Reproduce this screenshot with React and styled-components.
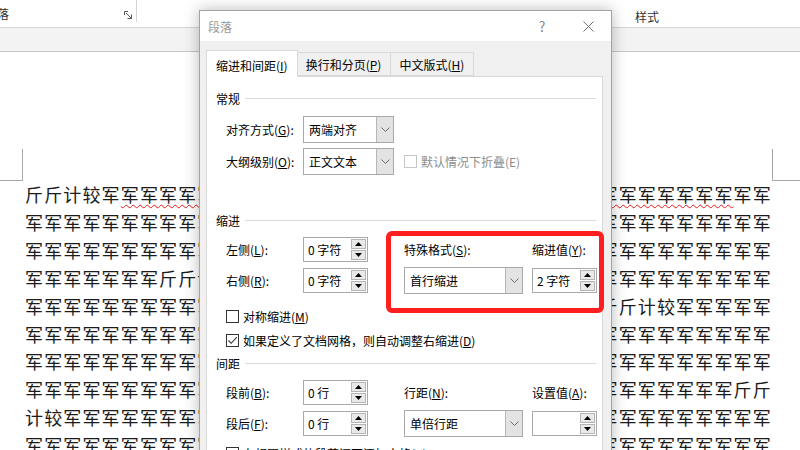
import React from "react"
import styled, { createGlobalStyle } from "styled-components"

const GlobalStyle = createGlobalStyle`
  html, body {
    margin: 0;
    padding: 0;
    overflow: hidden;
    background: #fff;
  }
`

const J = "军"
const docLines = [
  { pre: "斤斤计较军", wavy: J.repeat(32), post: J.repeat(2) },
  { pre: J.repeat(39) },
  { pre: J.repeat(39) },
  { pre: J.repeat(7) + "斤斤计较" + J.repeat(28) },
  { pre: J.repeat(30) + "斤斤计较" + J.repeat(5) },
  { pre: J.repeat(39) },
  { pre: J.repeat(39) },
  { pre: J.repeat(37) + "斤斤" },
  { pre: "计较" + J.repeat(37) },
  { pre: J.repeat(39) },
]

const Chevron = () => (
  <svg width="9" height="5" viewBox="0 0 9 5">
    <path d="M0.5 0.5L4.5 4.5L8.5 0.5" fill="none" stroke="#6d6d6d" strokeWidth="1" />
  </svg>
)

const Select = ({ width, value }) => (
  <SelectBox $w={width}>
    <SelectText>{value}</SelectText>
    <SelectButton>
      <Chevron />
    </SelectButton>
  </SelectBox>
)

const Spinner = ({ value }) => (
  <SpinBox>
    <SpinText>{value}</SpinText>
    <SpinButtons>
      <SpinButton>
        <svg width="7" height="4" viewBox="0 0 7 4">
          <path d="M0 4L3.5 0L7 4Z" fill="#000" />
        </svg>
      </SpinButton>
      <SpinButton>
        <svg width="7" height="4" viewBox="0 0 7 4">
          <path d="M0 0L3.5 4L7 0Z" fill="#000" />
        </svg>
      </SpinButton>
    </SpinButtons>
  </SpinBox>
)

const Check = ({ checked, disabled, children }) => (
  <CheckRow $disabled={disabled}>
    <CheckBox $disabled={disabled}>
      {checked && (
        <svg width="11" height="11" viewBox="0 0 11 11">
          <path d="M1.5 5.5L4.2 8.3L9.8 2.2" fill="none" stroke="#333" strokeWidth="1.1" />
        </svg>
      )}
    </CheckBox>
    <span>{children}</span>
  </CheckRow>
)

const App = () => {
  return (
    <Page>
      <GlobalStyle />
      <Ribbon>
        <ParaGroup>
          <GroupLabel $shift={-15}>段落</GroupLabel>
          <Launcher width="8" height="8" viewBox="0 0 8 8">
            <path d="M0.5 4V0.5H4" fill="none" stroke="#555" />
            <path d="M2 2L7 7" stroke="#555" />
            <path d="M3.5 7.5H7.5V3.5" fill="none" stroke="#555" />
          </Launcher>
        </ParaGroup>
        <StyleGroup>
          <GroupLabel>样式</GroupLabel>
        </StyleGroup>
      </Ribbon>
      <Strip />
      <Doc>
        <Marks>
          <LeftMark />
          <RightMark />
        </Marks>
        <TextBlock>
          {docLines.map((l, i) => (
            <Line key={i}>
              {l.pre}
              {l.wavy && <Wavy>{l.wavy}</Wavy>}
              {l.post}
            </Line>
          ))}
        </TextBlock>
      </Doc>

      <Dialog>
        <TitleBar>
          <Title>段落</Title>
          <TitleButton>?</TitleButton>
          <TitleButton>
            <svg width="11" height="11" viewBox="0 0 11 11">
              <path d="M0.5 0.5L10.5 10.5M10.5 0.5L0.5 10.5" stroke="#6f6f6f" strokeWidth="1" />
            </svg>
          </TitleButton>
        </TitleBar>
        <Body>
          <Tabs>
            <Tab $active>
              缩进和间距(<u>I</u>)
            </Tab>
            <Tab>
              换行和分页(<u>P</u>)
            </Tab>
            <Tab>
              中文版式(<u>H</u>)
            </Tab>
          </Tabs>
          <Panel>
            <SectionHeader>
              常规
              <Rule />
            </SectionHeader>
            <GeneralGrid>
              <Label>
                对齐方式(<u>G</u>):
              </Label>
              <Select width={91} value="两端对齐" />
              <span />
              <Label>
                大纲级别(<u>O</u>):
              </Label>
              <Select width={91} value="正文文本" />
              <Check disabled>默认情况下折叠(E)</Check>
            </GeneralGrid>

            <SectionHeader $top={37}>
              缩进
              <Rule />
            </SectionHeader>
            <MeasureGrid>
              <Label $col={1} $row={1}>
                左侧(<u>L</u>):
              </Label>
              <Cell $col={2} $row={1}>
                <Spinner value="0 字符" />
              </Cell>
              <Label $col={4} $row={1}>
                特殊格式(<u>S</u>):
              </Label>
              <Label $col={6} $row={1}>
                缩进值(<u>Y</u>):
              </Label>
              <Label $col={1} $row={2}>
                右侧(<u>R</u>):
              </Label>
              <Cell $col={2} $row={2}>
                <Spinner value="0 字符" />
              </Cell>
              <Cell $col={4} $row={2}>
                <Select width={119} value="首行缩进" />
              </Cell>
              <Cell $col={6} $row={2}>
                <Spinner value="2 字符" />
              </Cell>
              <Highlight />
            </MeasureGrid>
            <CheckList>
              <Check>
                对称缩进(<u>M</u>)
              </Check>
              <Check checked>
                如果定义了文档网格，则自动调整右缩进(<u>D</u>)
              </Check>
            </CheckList>

            <SectionHeader $top={5}>
              间距
              <Rule />
            </SectionHeader>
            <MeasureGrid>
              <Label $col={1} $row={1}>
                段前(<u>B</u>):
              </Label>
              <Cell $col={2} $row={1}>
                <Spinner value="0 行" />
              </Cell>
              <Label $col={4} $row={1}>
                行距(<u>N</u>):
              </Label>
              <Label $col={6} $row={1}>
                设置值(<u>A</u>):
              </Label>
              <Label $col={1} $row={2}>
                段后(<u>F</u>):
              </Label>
              <Cell $col={2} $row={2}>
                <Spinner value="0 行" />
              </Cell>
              <Cell $col={4} $row={2}>
                <Select width={119} value="单倍行距" />
              </Cell>
              <Cell $col={6} $row={2}>
                <Spinner value="" />
              </Cell>
            </MeasureGrid>
            <CheckList $top={6}>
              <Check>
                在相同样式的段落间不添加空格(<u>C</u>)
              </Check>
            </CheckList>
          </Panel>
        </Body>
      </Dialog>
    </Page>
  )
}

export default App

const Page = styled.div`
  position: relative;
  width: 800px;
  height: 450px;
  overflow: hidden;
  background: #fff;
  font-family: "Noto Sans CJK SC", "Noto Sans", sans-serif;
`

const Ribbon = styled.div`
  display: flex;
  height: 27px;
  background: #fff;
  border-bottom: 1px solid #d4d4d4;
`

const ParaGroup = styled.div`
  display: flex;
  align-items: center;
  justify-content: space-between;
  box-sizing: border-box;
  width: 137px;
  height: 22px;
  padding: 5px 4px 0 0;
  border-right: 1px solid #d4d4d4;
`

const StyleGroup = styled.div`
  display: flex;
  align-items: center;
  flex: 1;
  height: 22px;
  padding: 5px 0 0 498px;
`

const GroupLabel = styled.span`
  margin-left: ${(p) => p.$shift || 0}px;
  font-size: 12px;
  color: #333;
`

const Launcher = styled.svg`
  margin-top: 3px;
`

const Strip = styled.div`
  height: 23px;
  background: #f3f3f3;
  border-bottom: 1px solid #c6c6c6;
`

const Doc = styled.div`
  padding-top: 97px;
`

const Marks = styled.div`
  display: flex;
  justify-content: space-between;
`

const LeftMark = styled.div`
  box-sizing: border-box;
  width: 23px;
  height: 32px;
  border-right: 1px solid #a8a8a8;
  border-bottom: 1px solid #a8a8a8;
`

const RightMark = styled.div`
  box-sizing: border-box;
  width: 28px;
  height: 32px;
  border-left: 1px solid #a8a8a8;
  border-bottom: 1px solid #a8a8a8;
`

const TextBlock = styled.div`
  padding-left: 25px;
`

const Line = styled.div`
  width: 748px;
  overflow: hidden;
  white-space: pre;
  font-size: 18px;
  line-height: 27.9px;
  letter-spacing: 1.15px;
  color: #1c1c1c;
`

const Wavy = styled.span`
  text-decoration: underline wavy #e81a1a;
  text-decoration-thickness: 1px;
  text-underline-offset: 2px;
`

const Dialog = styled.div`
  position: absolute;
  top: 10px;
  left: 199px;
  width: 413px;
  height: 470px;
  box-sizing: border-box;
  display: flex;
  flex-direction: column;
  background: #f0f0f0;
  border: 1px solid #a3a3a3;
  box-shadow: 0 0 14px rgba(0, 0, 0, 0.28);
  font-size: 12px;
  color: #000;
`

const TitleBar = styled.div`
  display: flex;
  align-items: center;
  height: 30px;
  padding-left: 8px;
  background: #fff;
`

const Title = styled.span`
  flex: 1;
  font-size: 12px;
  color: #9a9a9a;
`

const TitleButton = styled.div`
  display: flex;
  align-items: center;
  justify-content: center;
  width: 46px;
  height: 30px;
  font-size: 14px;
  color: #8a8a8a;
`

const Body = styled.div`
  display: flex;
  flex-direction: column;
  flex: 1;
  padding: 9px 8px 0 6px;
`

const Tabs = styled.div`
  display: flex;
  align-items: flex-end;
  height: 26px;
`

const Tab = styled.div`
  position: relative;
  z-index: ${(p) => (p.$active ? 1 : 0)};
  display: flex;
  align-items: center;
  box-sizing: border-box;
  height: ${(p) => (p.$active ? 27 : 24)}px;
  margin-bottom: ${(p) => (p.$active ? -1 : 0)}px;
  margin-left: ${(p) => (p.$active ? 0 : -1)}px;
  padding: 0 9px 0 ${(p) => (p.$active ? 9 : 8)}px;
  padding-top: ${(p) => (p.$active ? 2 : 0)}px;
  background: ${(p) => (p.$active ? "#fff" : "#f0f0f0")};
  border: 1px solid #d9d9d9;
  border-bottom: ${(p) => (p.$active ? "none" : "1px solid #d9d9d9")};
  white-space: nowrap;

  &:first-child {
    margin-left: 0;
  }
`

const Panel = styled.div`
  flex: 1;
  padding: 13px 6px 0 9px;
  background: #fff;
  border: 1px solid #d9d9d9;
`

const SectionHeader = styled.div`
  display: flex;
  align-items: center;
  height: 16px;
  margin-top: ${(p) => p.$top || 0}px;
`

const Rule = styled.div`
  flex: 1;
  height: 1px;
  margin-left: 5px;
  background: #dadada;
`

const GeneralGrid = styled.div`
  display: grid;
  grid-template-columns: 77px 91px auto;
  grid-template-rows: 27px 27px;
  row-gap: 5px;
  align-items: center;
  margin-top: 10px;
  padding-left: 10px;

  & > div:last-child {
    margin-left: 10px;
  }
`

const MeasureGrid = styled.div`
  display: grid;
  grid-template-columns: 77px 65px 36px 119px 9px 65px;
  grid-template-rows: 25px 27px;
  row-gap: 5px;
  align-items: center;
  margin-top: 9px;
  padding-left: 10px;
`

const Label = styled.span`
  grid-column: ${(p) => p.$col || "auto"};
  grid-row: ${(p) => p.$row || "auto"};
  white-space: nowrap;
  line-height: 16px;
`

const Cell = styled.div`
  grid-column: ${(p) => p.$col};
  grid-row: ${(p) => p.$row};
  display: flex;
`

const Highlight = styled.div`
  grid-column: 4 / 7;
  grid-row: 1 / 3;
  align-self: stretch;
  margin: -6px -7px -19px -18px;
  border: 5px solid #ff1f1f;
  border-radius: 6px;
  pointer-events: none;
`

const SelectBox = styled.div`
  display: flex;
  box-sizing: border-box;
  width: ${(p) => p.$w}px;
  height: 27px;
  background: #fff;
  border: 1px solid #a9a9a9;
`

const SelectText = styled.span`
  flex: 1;
  padding-left: 5px;
  line-height: 25px;
  white-space: nowrap;
`

const SelectButton = styled.div`
  display: flex;
  align-items: center;
  justify-content: center;
  width: 16px;
  background: #e3e3e3;
  border-left: 1px solid #b7b7b7;
`

const SpinBox = styled.div`
  display: flex;
  box-sizing: border-box;
  width: 65px;
  height: 25px;
  background: #fff;
  border: 1px solid #a9a9a9;
`

const SpinText = styled.span`
  flex: 1;
  padding-left: 4px;
  line-height: 23px;
  white-space: nowrap;
`

const SpinButtons = styled.div`
  display: flex;
  flex-direction: column;
  gap: 1px;
  width: 15px;
  padding: 1px 1px 1px 0;
`

const SpinButton = styled.div`
  display: flex;
  flex: 1;
  align-items: center;
  justify-content: center;
  background: #e9e9e9;
  border: 1px solid #b4b4b4;
`

const CheckList = styled.div`
  display: flex;
  flex-direction: column;
  gap: 4px;
  margin-top: ${(p) => p.$top || 12}px;
  padding-left: 10px;
`

const CheckRow = styled.div`
  display: flex;
  align-items: center;
  gap: 4px;
  height: 20px;
  color: ${(p) => (p.$disabled ? "#8d8d8d" : "#000")};
  white-space: nowrap;
`

const CheckBox = styled.div`
  display: flex;
  align-items: center;
  justify-content: center;
  box-sizing: border-box;
  width: 13px;
  height: 13px;
  background: #fff;
  border: 1px solid ${(p) => (p.$disabled ? "#c6c6c6" : "#333")};
`
